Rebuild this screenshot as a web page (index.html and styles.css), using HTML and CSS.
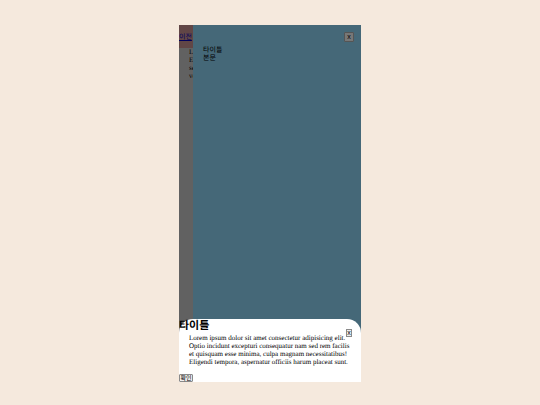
FILE: index.html
```
<!DOCTYPE html>
<html lang="ko">
<head>
    <meta charset="UTF-8">
    <meta name="viewport" content="width=device-width, initial-scale=1.0">
    <title>Drawer</title>
    <link rel="stylesheet" href="styles.css">
</head>
<body>

<div class="phone">
    <header class="header">
        <a href="#">이전</a>
    </header>
    <main class="content">
        <p>
            Lorem ipsum dolor sit amet consectetur adipisicing.<br>
            Et quisquam minima culpa magnam necessitatibus<br>
            sed rem facilis optio incidunt excepturi<br>
            voluptatum officiis.
        </p>
    </main>

    <div class="dim"></div>

    <aside class="drawer">
        <button type="button" class="close-button">x</button>
        <div class="drawer-title">타이틀</div>
        <div>본문</div>
    </aside>

    <section class="sheet">
        <button type="button" class="sheet-close">x</button>
        <h2>타이틀</h2>
        <p>Lorem ipsum dolor sit amet consectetur adipisicing elit. Optio incidunt excepturi consequatur nam sed rem facilis et quisquam esse minima, culpa magnam necessitatibus! Eligendi tempora, aspernatur officiis harum placeat sunt.</p>
        <button type="button" class="confirm-button">확인</button>
    </section>
</div>

</body>
</html>
```

FILE: styles.css
```
* {
    box-sizing: border-box;
}

body {
    display: flex;
    align-items: center;
    justify-content: center;
    min-height: 100vh;
    margin: 0;
    padding-top: 2px;
    background-color: #f5e9dd;
    color: #000;
    font-family: "Liberation Serif", "Noto Sans CJK KR", serif;
    font-size: 7px;
    line-height: 8px;
    text-rendering: geometricPrecision;
}

h2,
p {
    margin: 0;
}

button {
    padding: 0;
    font-family: "Liberation Sans", "Noto Sans CJK KR", sans-serif;
    font-size: 6px;
    line-height: 6px;
    text-align: center;
    color: #000;
    background-color: #efefef;
    border: 1px solid #8a8a8a;
    border-radius: 1px;
}

.phone {
    position: relative;
    width: 33vw;
    min-width: 182px;
    height: 88vh;
    overflow: hidden;
    background-color: #fff;
}

.header {
    display: flex;
    align-items: center;
    height: 23px;
    background-color: #ffb8b8;
}

.header a {
    color: #0000ee;
}

.content {
    padding: 0 10px;
    white-space: nowrap;
}

.dim {
    position: absolute;
    inset: 0;
    background-color: rgba(0, 0, 0, 0.62);
}

.drawer {
    position: absolute;
    top: 0;
    right: 0;
    bottom: 0;
    left: 14px;
    padding: 21px 10px;
    background-color: #456878;
}

.close-button {
    position: absolute;
    top: 7px;
    right: 7px;
    width: 10px;
    height: 10px;
    font-size: 7px;
    background-color: #777;
    border-color: #555;
}

.sheet {
    position: absolute;
    right: 0;
    bottom: 0;
    left: 0;
    background-color: #fff;
    border-radius: 14px 14px 0 0;
}

.sheet h2 {
    font-family: "Liberation Sans", "Noto Sans CJK KR", sans-serif;
    font-size: 11px;
    line-height: 14px;
}

.sheet p {
    padding: 1px 10px 8px;
}

.sheet-close {
    position: absolute;
    top: 10px;
    right: 9px;
    width: 6px;
    height: 8px;
    font-size: 7px;
    border-radius: 0;
}

.confirm-button {
    display: block;
    width: 14px;
    height: 8px;
}
```
